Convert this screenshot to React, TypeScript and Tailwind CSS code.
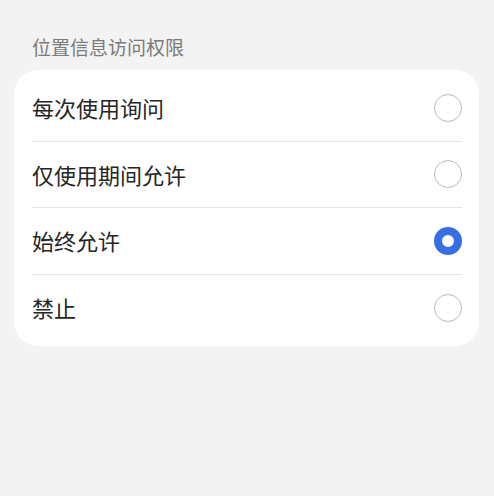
import { useState } from "react";

const options = ["每次使用询问", "仅使用期间允许", "始终允许", "禁止"];

export default function App() {
  const [selected, setSelected] = useState(2);

  return (
    <div
      className="min-h-[496px] w-full bg-[#f3f3f3] px-[14px] pt-[32px]"
      style={{ fontFamily: '"Noto Sans CJK SC", "Noto Sans", sans-serif' }}
    >
      <div className="px-[18px] text-[19px] leading-[30px] text-[#7a7a7a]">位置信息访问权限</div>

      <div className="mt-[8px] w-[465px] rounded-[24px] bg-white pl-[18px] pr-[17px] py-[5px]">
        {options.map((label, i) => (
          <button
            key={label}
            onClick={() => setSelected(i)}
            className={[
              "flex h-[66.5px] w-full items-center justify-between text-left",
              i < options.length - 1 ? "border-b border-[#e6e6e6]" : "",
            ].join(" ")}
          >
            <span className="text-[22px] text-[#262626]">{label}</span>
            {selected === i ? (
              <span className="h-[28px] w-[28px] rounded-full border-[8px] border-[#356fe3] bg-white" />
            ) : (
              <span className="h-[28px] w-[28px] rounded-full border-[1.5px] border-[#b9b9b9] bg-white" />
            )}
          </button>
        ))}
      </div>
    </div>
  );
}
